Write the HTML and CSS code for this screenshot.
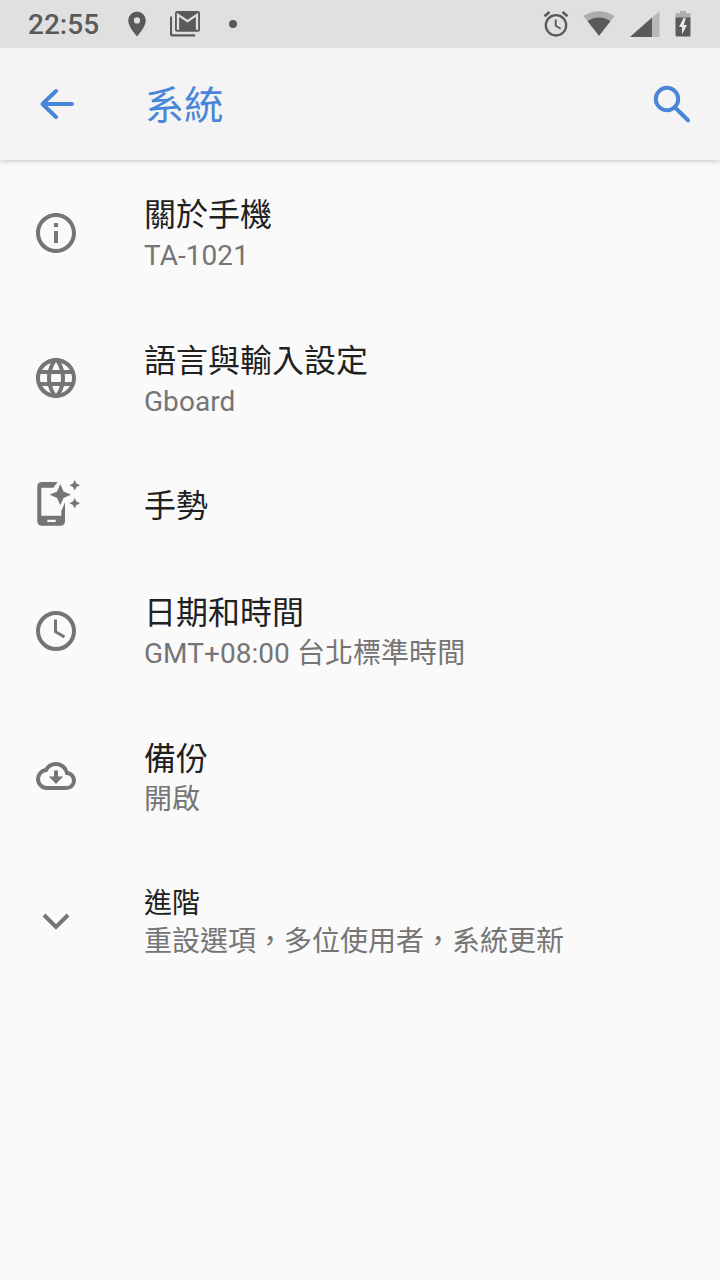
FILE: index.html
```html
<!DOCTYPE html>
<html lang="zh-Hant">
<head>
<meta charset="utf-8">
<title>系統</title>
<link rel="stylesheet" href="styles.css">
</head>
<body>
<div class="screen">
  <header class="status">
    <span class="clock">22:55</span>
    <svg class="pin" width="18" height="26" viewBox="0 0 18 26"><path fill-rule="evenodd" d="M9 .6a8.8 8.8 0 0 0-8.8 8.8C.2 16 9 25.300 9 25.300s8.800-9.300 8.800-15.900A8.800 8.800 0 0 0 9 .6zm0 5.700a3.100 3.100 0 1 1 0 6.200 3.100 3.100 0 0 1 0-6.200z"/></svg>
    <svg class="mail" width="30" height="26" viewBox="0 0 30 26"><path d="M0 5.500h2.100v17.800h23v2.300H2a2 2 0 0 1-2-2z"/><rect x="5" y="0" width="25" height="20.800" rx="2"/><path class="cut" d="M8 18.800V3.800l9.500 6.400L27 3.800v15" stroke-width="2.300"/></svg>
    <svg class="dot" width="8" height="8" viewBox="0 0 8 8"><circle cx="4" cy="4" r="4"/></svg>
    <div class="signals">
      <svg width="26" height="26" viewBox="0 0 26 26"><g class="line"><circle cx="13" cy="14.300" r="10.200" stroke-width="2.300"/><path d="M12.700 8.500v6.200l5 3" stroke-width="1.900"/><path d="M1.500 5.300l5-4.200M24.500 5.300l-5-4.200" stroke-width="2.600"/></g></svg>
      <svg width="32" height="26" viewBox="0 0 32 26"><path class="faint" d="M16 24.800L.5 5.100Q7.500.3 16 .3t15.500 4.800z"/><path d="M16 24.800L4.600 10.300Q9.500 6.500 16 6.500t11.400 3.800z"/></svg>
      <svg width="30" height="26" viewBox="0 0 30 26"><path class="pale" d="M29.500 0v26H0z"/><path d="M22 6.600V26H0z"/></svg>
      <svg width="16" height="26" viewBox="0 0 16 26"><path class="faint" d="M5 0h6v2.200h4.500V7H.5V2.200H5z"/><path d="M.5 6.500h15V24a1.500 1.500 0 0 1-1.500 1.500H2A1.500 1.500 0 0 1 .5 24z"/><path class="bolt" d="M8.500 7L4 16h3v7.500L12 14H8.800l2-7z"/></svg>
    </div>
  </header>
  <nav class="toolbar">
    <svg width="48" height="48" viewBox="0 0 48 48"><path d="M40 24H11M24 11L10.500 24 24 37" stroke-width="4" stroke-linecap="round" stroke-linejoin="round"/></svg>
    <h1>系統</h1>
    <svg width="48" height="48" viewBox="0 0 48 48"><circle cx="19" cy="19" r="11.200" stroke-width="4"/><path d="M28.300 28.800L40 40.300" stroke-width="4" stroke-linecap="round"/></svg>
  </nav>
  <main class="list">
    <section class="row">
      <svg class="icon" viewBox="0 0 24 24"><path d="M11 17h2v-6h-2v6zm1-15C6.480 2 2 6.480 2 12s4.480 10 10 10 10-4.480 10-10S17.520 2 12 2zm0 18c-4.410 0-8-3.590-8-8s3.590-8 8-8 8 3.590 8 8-3.590 8-8 8zM11 9h2V7h-2v2z"/></svg>
      <div class="text"><h2>關於手機</h2><p>TA-1021</p></div>
    </section>
    <section class="row">
      <svg class="icon" viewBox="0 0 24 24"><path d="M11.990 2C6.470 2 2 6.480 2 12s4.470 10 9.990 10C17.520 22 22 17.520 22 12S17.520 2 11.990 2zm6.930 6h-2.950c-.32-1.250-.78-2.450-1.380-3.560 1.840.63 3.370 1.910 4.330 3.560zM12 4.040c.83 1.200 1.480 2.530 1.910 3.960h-3.820c.43-1.430 1.080-2.760 1.910-3.960zM4.260 14C4.100 13.360 4 12.690 4 12s.1-1.360.26-2h3.380c-.08.66-.14 1.320-.14 2s.06 1.340.14 2H4.260zm.82 2h2.950c.32 1.250.78 2.450 1.380 3.560-1.840-.63-3.370-1.900-4.330-3.560zm2.950-8H5.080c.96-1.660 2.490-2.930 4.330-3.560C8.810 5.550 8.350 6.750 8.030 8zM12 19.960c-.83-1.200-1.480-2.530-1.910-3.960h3.820c-.43 1.430-1.080 2.760-1.910 3.960zM14.340 14H9.660c-.09-.66-.16-1.320-.16-2s.07-1.350.16-2h4.680c.09.65.16 1.320.16 2s-.07 1.340-.16 2zm.25 5.560c.6-1.110 1.060-2.310 1.380-3.560h2.950c-.96 1.650-2.490 2.930-4.330 3.560zM16.360 14c.08-.66.14-1.320.14-2s-.06-1.340-.14-2h3.380c.16.640.26 1.310.26 2s-.1 1.360-.26 2h-3.380z"/></svg>
      <div class="text"><h2>語言與輸入設定</h2><p>Gboard</p></div>
    </section>
    <section class="row single">
      <svg class="icon" viewBox="0 0 48 48"><path fill-rule="evenodd" d="M25.700 1H9.500a4.200 4.200 0 0 0-4.200 4.200v35.300a4.200 4.200 0 0 0 4.200 4.200h19.300a4.200 4.200 0 0 0 4.200-4.200V21.300L29.300 30v4.700h-20v-28h12zM15.300 38.700h8.400V41h-8.400z"/><path d="M28.300 3.100l3.200 7.400 7.400 3.200-7.400 3.200-3.200 7.400-3.200-7.400-7.400-3.200 7.400-3.200zM42.700-1l1.700 3.600L48 4.300l-3.600 1.700-1.700 3.600-1.700-3.600-3.600-1.700L41 2.600zM42.700 17l1.700 3.600 3.600 1.700-3.600 1.700-1.700 3.600-1.700-3.600-3.600-1.700 3.600-1.700z"/></svg>
      <div class="text"><h2>手勢</h2></div>
    </section>
    <section class="row">
      <svg class="icon" viewBox="0 0 48 48"><g class="line"><circle cx="24" cy="24" r="18" stroke-width="4"/><path d="M23.500 12.500v12.200l9 5.300" stroke-width="3"/></g></svg>
      <div class="text"><h2>日期和時間</h2><p>GMT+08:00 台北標準時間</p></div>
    </section>
    <section class="row">
      <svg class="icon" viewBox="0 0 24 24"><path class="cloud" transform="translate(3 3) scale(.75)" d="M19.350 10.040C18.670 6.590 15.640 4 12 4 9.110 4 6.600 5.640 5.350 8.040 2.340 8.360 0 10.910 0 14c0 3.310 2.690 6 6 6h13c2.760 0 5-2.240 5-5 0-2.640-2.050-4.780-4.650-4.960z"/><path d="M11 9.300h2v2.900h2.600L12 16l-3.600-3.800H11z"/></svg>
      <div class="text"><h2>備份</h2><p>開啟</p></div>
    </section>
    <section class="row advanced">
      <svg class="icon" viewBox="0 0 48 48"><path class="line" d="M12 17l12 12 12-12" stroke-width="4"/></svg>
      <div class="text"><h2>進階</h2><p>重設選項，多位使用者，系統更新</p></div>
    </section>
  </main>
</div>
</body>
</html>
```
FILE: styles.css
```css
* { box-sizing: border-box; }
body {
  margin: 0;
  font-family: Roboto, "Noto Sans CJK TC", sans-serif;
  background: #fafafa;
}
svg { display: block; flex: none; }
h1, h2, p { margin: 0; font-weight: 400; white-space: nowrap; }
.screen { height: 1280px; overflow: hidden; }
.status {
  display: flex;
  align-items: center;
  height: 48px;
  padding: 0 28px;
  background: #e0e0e0;
  color: #5a5a5a;
  fill: #5a5a5a;
}
.clock { width: 100px; font-size: 28px; font-weight: 500; line-height: 48px; padding-top: 2px; }
.mail { margin-left: 24px; }
.dot { margin-left: 29px; }
.faint { fill: #adadad; }
.pale { fill: #b8b8b8; }
.cut { fill: none; stroke: #e0e0e0; }
.bolt { fill: #e8e8e8; }
.signals { display: flex; gap: 15px; margin-left: auto; margin-right: 1px; }
.signals svg:first-child { margin-right: -1px; }
.line { fill: none; stroke: currentColor; }
.toolbar {
  display: flex;
  align-items: center;
  height: 112px;
  padding: 0 24px 0 32px;
  background: #f4f4f4;
  color: #4a86d8;
  fill: none;
  stroke: #4a86d8;
  box-shadow: 0 1px 5px rgba(0, 0, 0, .22);
  clip-path: inset(0 0 -10px);
}
.toolbar h1 { flex: 1; margin-left: 65px; padding-top: 3px; font-size: 39.200px; line-height: 56px; }
.row {
  display: flex;
  align-items: center;
  height: 145.5px;
  padding: 0 32px;
  gap: 64px;
  color: #757575;
}
.single { height: 107px; }
.icon { width: 48px; height: 48px; overflow: visible; fill: #757575; }
.icon .line { fill: none; }
.icon .cloud { fill: none; stroke: #757575; stroke-width: 2.667; }
.text { padding-top: 3px; }
.row h2 { color: #212121; font-size: 32px; line-height: 44px; }
.row p { font-size: 28px; line-height: 38px; letter-spacing: .05px; }
.single .text { padding-top: 2px; }
.advanced .text { padding-top: 2px; }
.advanced h2 { font-size: 28px; line-height: 38px; }
.advanced p { letter-spacing: 0; }
```
